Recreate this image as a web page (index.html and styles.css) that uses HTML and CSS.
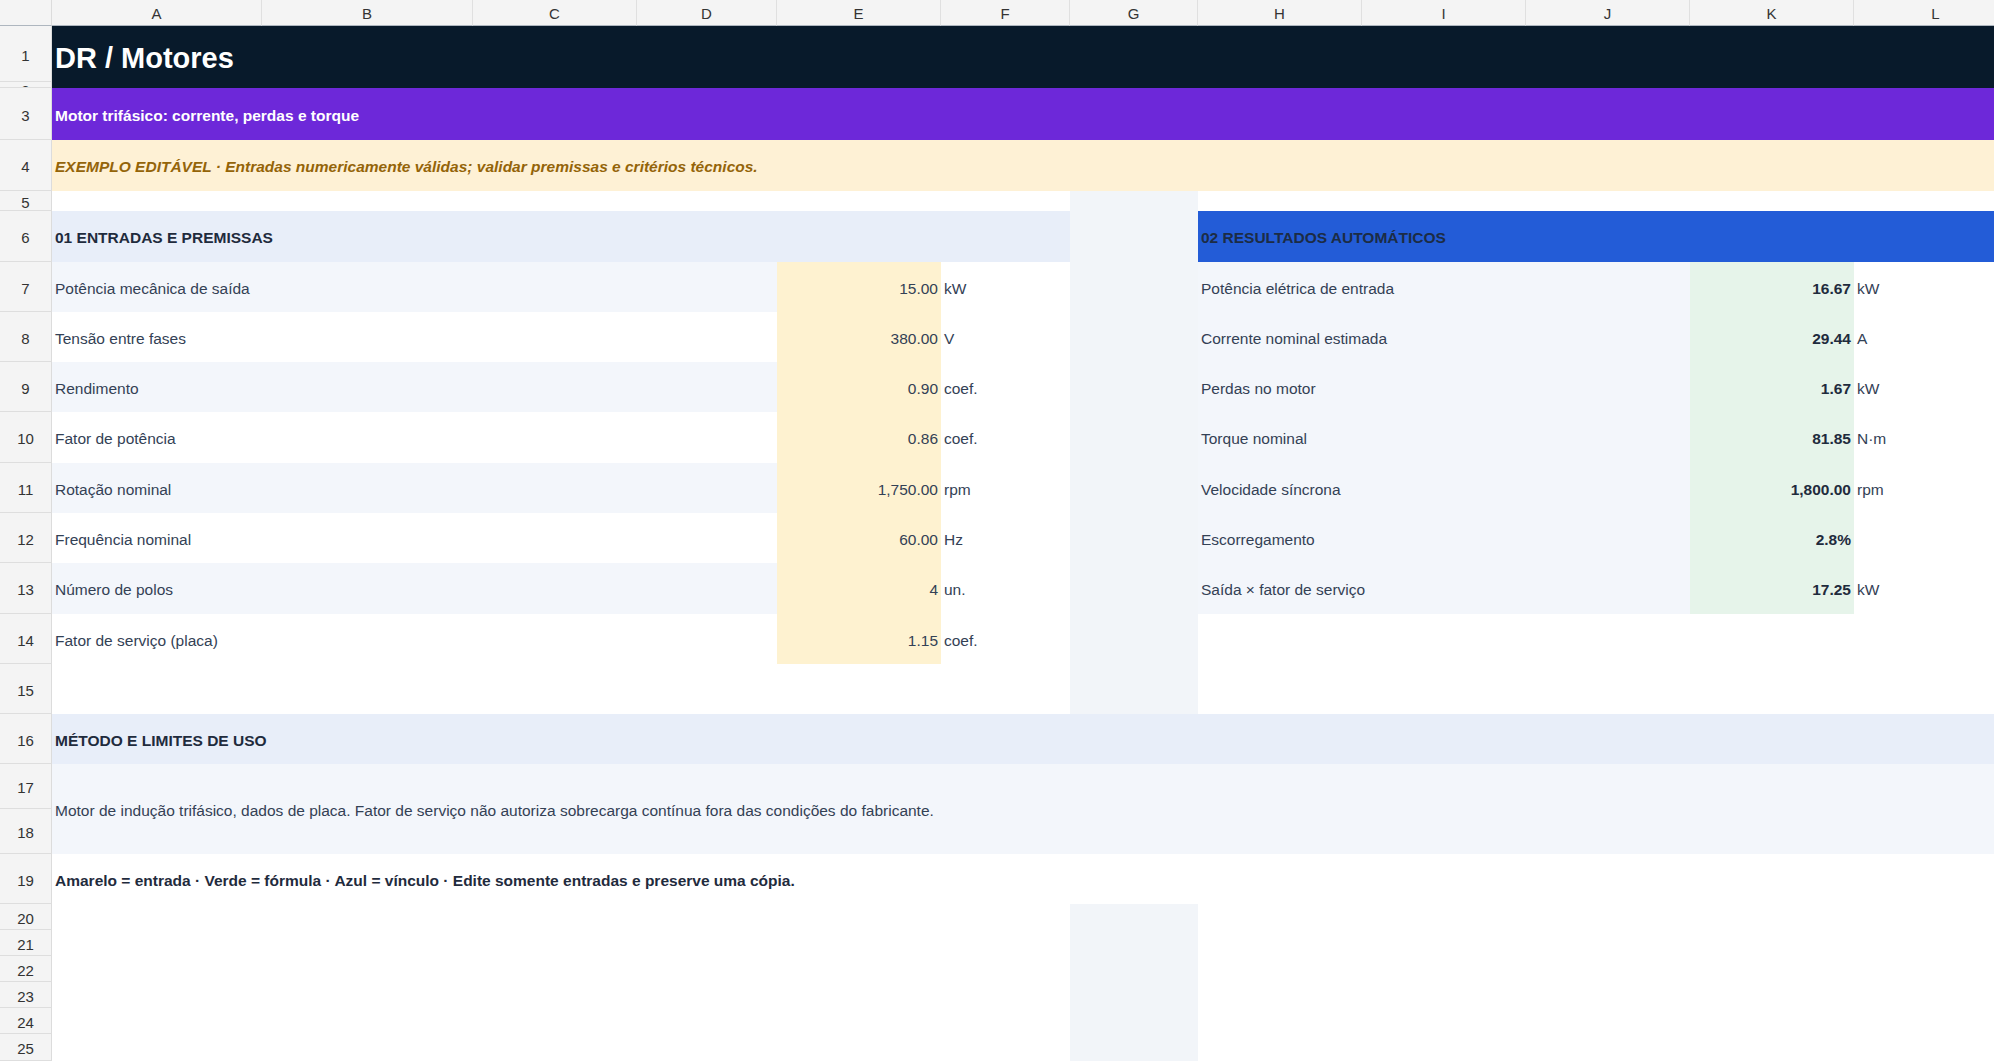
FILE: index.html
```html
<!DOCTYPE html>
<html lang="pt">
<head>
<meta charset="utf-8">
<title>DR / Motores</title>
<link rel="stylesheet" href="styles.css">
</head>
<body>
<div class="sheet">
  <div class="corner"></div>
  <div class="ch">A</div><div class="ch">B</div><div class="ch">C</div><div class="ch">D</div><div class="ch">E</div><div class="ch">F</div><div class="ch">G</div><div class="ch">H</div><div class="ch">I</div><div class="ch">J</div><div class="ch">K</div><div class="ch">L</div>

  <div class="rh">1</div>
  <div class="c a-l title">DR / Motores</div>
  <div class="rh rh-tiny">2</div>

  <div class="rh">3</div>
  <div class="c a-l subtitle">Motor trifásico: corrente, perdas e torque</div>

  <div class="rh">4</div>
  <div class="c a-l warn">EXEMPLO EDITÁVEL · Entradas numericamente válidas; validar premissas e critérios técnicos.</div>

  <div class="rh">5</div>
  <div class="c a-f"></div><div class="c g"></div><div class="c h-l"></div>

  <div class="rh">6</div>
  <div class="c a-f sec">01 ENTRADAS E PREMISSAS</div><div class="c g"></div><div class="c h-l blue">02 RESULTADOS AUTOMÁTICOS</div>

  <div class="rh">7</div>
  <div class="c a-d alt">Potência mecânica de saída</div><div class="c inp">15.00</div><div class="c unit">kW</div><div class="c g"></div>
  <div class="c h-j res">Potência elétrica de entrada</div><div class="c out">16.67</div><div class="c unit">kW</div>

  <div class="rh">8</div>
  <div class="c a-d">Tensão entre fases</div><div class="c inp">380.00</div><div class="c unit">V</div><div class="c g"></div>
  <div class="c h-j res">Corrente nominal estimada</div><div class="c out">29.44</div><div class="c unit">A</div>

  <div class="rh">9</div>
  <div class="c a-d alt">Rendimento</div><div class="c inp">0.90</div><div class="c unit">coef.</div><div class="c g"></div>
  <div class="c h-j res">Perdas no motor</div><div class="c out">1.67</div><div class="c unit">kW</div>

  <div class="rh">10</div>
  <div class="c a-d">Fator de potência</div><div class="c inp">0.86</div><div class="c unit">coef.</div><div class="c g"></div>
  <div class="c h-j res">Torque nominal</div><div class="c out">81.85</div><div class="c unit">N·m</div>

  <div class="rh">11</div>
  <div class="c a-d alt">Rotação nominal</div><div class="c inp">1,750.00</div><div class="c unit">rpm</div><div class="c g"></div>
  <div class="c h-j res">Velocidade síncrona</div><div class="c out">1,800.00</div><div class="c unit">rpm</div>

  <div class="rh">12</div>
  <div class="c a-d">Frequência nominal</div><div class="c inp">60.00</div><div class="c unit">Hz</div><div class="c g"></div>
  <div class="c h-j res">Escorregamento</div><div class="c out">2.8%</div><div class="c unit"></div>

  <div class="rh">13</div>
  <div class="c a-d alt">Número de polos</div><div class="c inp">4</div><div class="c unit">un.</div><div class="c g"></div>
  <div class="c h-j res">Saída × fator de serviço</div><div class="c out">17.25</div><div class="c unit">kW</div>

  <div class="rh">14</div>
  <div class="c a-d">Fator de serviço (placa)</div><div class="c inp">1.15</div><div class="c unit">coef.</div><div class="c g"></div>
  <div class="c h-l"></div>

  <div class="rh">15</div>
  <div class="c a-f"></div><div class="c g"></div><div class="c h-l"></div>

  <div class="rh">16</div>
  <div class="c a-l sec">MÉTODO E LIMITES DE USO</div>

  <div class="rh">17</div>
  <div class="c a-l note">Motor de indução trifásico, dados de placa. Fator de serviço não autoriza sobrecarga contínua fora das condições do fabricante.</div>
  <div class="rh">18</div>

  <div class="rh">19</div>
  <div class="c a-l legend">Amarelo = entrada · Verde = fórmula · Azul = vínculo · Edite somente entradas e preserve uma cópia.</div>

  <div class="rh">20</div>
  <div class="c a-f"></div><div class="c g"></div><div class="c h-l"></div>
  <div class="rh">21</div>
  <div class="c a-f"></div><div class="c g"></div><div class="c h-l"></div>
  <div class="rh">22</div>
  <div class="c a-f"></div><div class="c g"></div><div class="c h-l"></div>
  <div class="rh">23</div>
  <div class="c a-f"></div><div class="c g"></div><div class="c h-l"></div>
  <div class="rh">24</div>
  <div class="c a-f"></div><div class="c g"></div><div class="c h-l"></div>
  <div class="rh">25</div>
  <div class="c a-f"></div><div class="c g"></div><div class="c h-l"></div>
</div>
</body>
</html>
```
FILE: styles.css
```css
html, body {
  margin: 0;
  padding: 0;
  background: #ffffff;
  overflow: hidden;
}

body {
  width: 1994px;
  height: 1061px;
  font-family: "Liberation Sans", Arial, sans-serif;
  font-size: 15.5px;
  color: #334155;
}

.sheet {
  display: grid;
  grid-template-columns: 52px 210px 211px 164px 140px 164px 129px 128px 164px 164px 164px 164px 164px;
  grid-template-rows: 26px 56px 6px 52px 51px 20px 51px 50px 50px 50px 51px 50px 50px 51px 50px 50px 50px 45px 45px 50px 26px 26px 26px 26px 26px 27px;
  width: 2018px;
}

.corner,
.ch {
  background: #f4f4f4;
  border-bottom: 1px solid #aeb6bf;
  box-sizing: border-box;
}

.corner {
  border-right: 1px solid #dcdcdc;
}

.ch {
  border-right: 1px solid #e0e0e0;
  display: flex;
  align-items: center;
  justify-content: center;
  font-size: 15px;
  color: #333333;
  padding-top: 1px;
}

.rh {
  background: #f4f4f4;
  border-bottom: 1px solid #dedede;
  border-right: 1px solid #dcdcdc;
  box-sizing: border-box;
  display: flex;
  align-items: center;
  justify-content: center;
  font-size: 15px;
  color: #333333;
  overflow: hidden;
  padding-top: 3px;
}

.rh-tiny {
  align-items: flex-start;
  line-height: 1;
  padding-top: 1px;
}

.c {
  display: flex;
  align-items: center;
  padding: 3px 3px 0;
  white-space: nowrap;
  overflow: visible;
  min-width: 0;
  background: #ffffff;
}

.a-l { grid-column: span 12; }
.a-f { grid-column: span 6; }
.a-d { grid-column: span 4; }
.h-j { grid-column: span 3; }
.h-l { grid-column: span 5; }

.title {
  grid-row: span 2;
  background: #081a2b;
  color: #ffffff;
  font-weight: 700;
  font-size: 29px;
}

.subtitle {
  background: #6d28d9;
  color: #ffffff;
  font-weight: 700;
}

.warn {
  background: #fef1d5;
  color: #946409;
  font-weight: 700;
  font-style: italic;
}

.sec {
  background: #e8eef9;
  color: #1f2b3d;
  font-weight: 700;
}

.blue {
  background: #235cd7;
  color: #1c2c45;
  font-weight: 700;
}

.g {
  background: #f2f5f9;
}

.alt {
  background: #f3f6fb;
}

.inp {
  background: #fef2d0;
  justify-content: flex-end;
}

.unit {
  background: #ffffff;
}

.res {
  background: #f3f6fb;
}

.out {
  background: #e6f4ea;
  justify-content: flex-end;
  font-weight: 700;
  color: #1f2b3d;
}

.note {
  grid-row: span 2;
  background: #f3f6fb;
}

.legend {
  font-weight: 700;
  color: #1f2b3d;
}
```
